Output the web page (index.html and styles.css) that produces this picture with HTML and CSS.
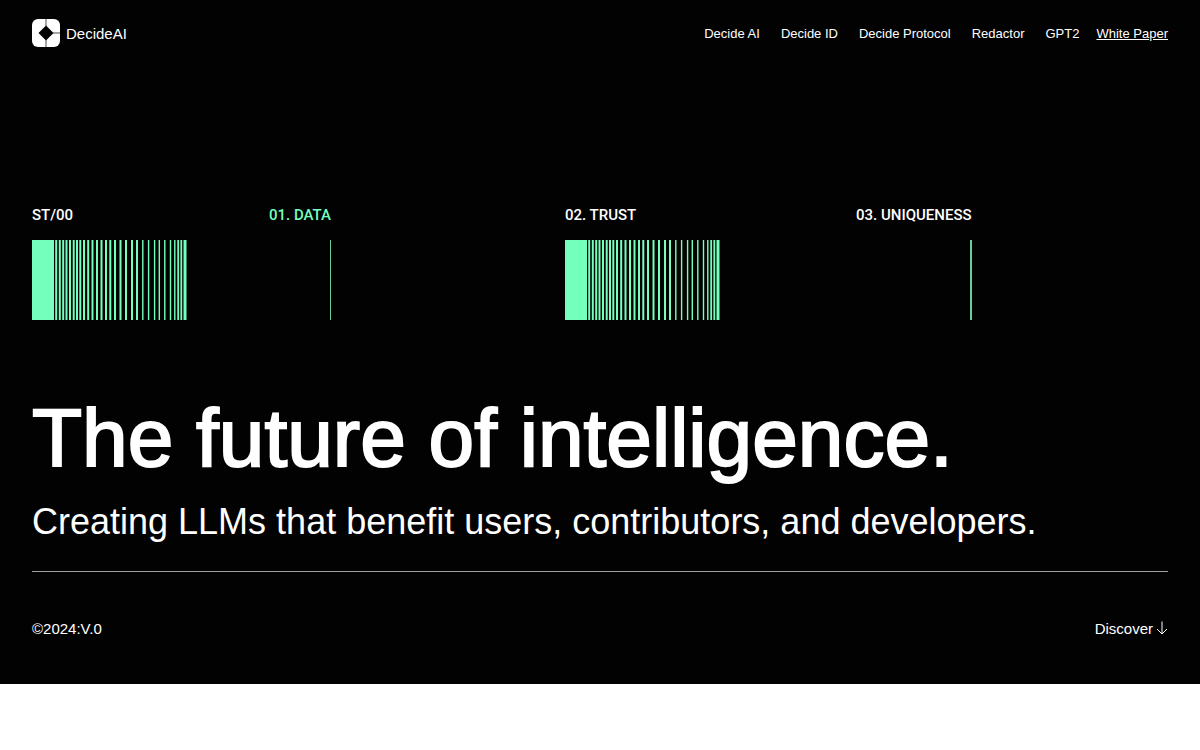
FILE: index.html
```
<!DOCTYPE html>
<html lang="en">
<head>
  <meta charset="utf-8">
  <meta name="viewport" content="width=device-width, initial-scale=1">
  <title>DecideAI</title>
  <link rel="stylesheet" href="styles.css">
</head>
<body>
  <!-- barcode shape, used twice below -->
  <svg class="sprite" aria-hidden="true">
    <symbol id="barcode" viewBox="0 0 155 80">
      <path fill="currentColor" d="M0 0h22v80H0z"/>
      <g fill="none" stroke="currentColor">
        <path stroke-width="2" d="M24.2 0v80M27.8 0v80M31.2 0v80M34.5 0v80M38 0v80M41.7 0v80M45 0v80M48.3 0v80M52 0v80M56.2 0v80M60.5 0v80M65 0v80M69.5 0v80M74 0v80M78.3 0v80M83 0v80M88.5 0v80M94 0v80M100 0v80M105 0v80"/>
        <path stroke-width="1.4" d="M110.8 0v80M116.6 0v80M122.6 0v80M127.3 0v80M132.8 0v80M138.5 0v80M142.8 0v80"/>
        <path stroke-width="1.8" d="M146.2 0v80M149.3 0v80"/>
        <path stroke-width="3" d="M153 0v80"/>
      </g>
    </symbol>
  </svg>

  <div class="hero">
    <header class="header">
      <a href="#" class="logo">
        <svg width="28" height="28" viewBox="0 0 28 28" aria-hidden="true">
          <rect width="28" height="28" rx="6" fill="#fff"/>
          <path d="M14 6.5 21.5 14 14 21.5 6.5 14z" fill="#020202"/>
          <path d="M14 0v7M14 21v7M21 14h7" stroke="#020202" stroke-width=".7"/>
        </svg>
        <span>DecideAI</span>
      </a>
      <nav class="nav">
        <a href="#">Decide AI</a>
        <a href="#">Decide ID</a>
        <a href="#">Decide Protocol</a>
        <a href="#">Redactor</a>
        <a href="#">GPT2</a>
        <a href="#" class="paper">White Paper</a>
      </nav>
    </header>

    <main>
      <div class="stats">
        <div class="stat">
          <span>ST/00</span>
          <svg class="barcode"><use href="#barcode"/></svg>
        </div>
        <div class="stat active">
          <span>01. DATA</span>
          <div class="bar thin"></div>
        </div>
        <div class="stat">
          <span>02. TRUST</span>
          <svg class="barcode"><use href="#barcode"/></svg>
        </div>
        <div class="stat">
          <span>03. UNIQUENESS</span>
          <div class="bar"></div>
        </div>
      </div>

      <h1>The future of intelligence.</h1>
      <p class="subtitle">Creating LLMs that benefit users, contributors, and developers.</p>
    </main>

    <footer class="footer">
      <span>©2024:V.0</span>
      <a href="#" class="discover">
        Discover
        <svg width="12" height="14" viewBox="0 0 12 14" fill="none" stroke="currentColor" aria-hidden="true">
          <path d="M6 .5v12.5M1 8l5 5 5-5"/>
        </svg>
      </a>
    </footer>
  </div>
</body>
</html>
```
FILE: styles.css
```
body {
  margin: 0;
  background: #ffffff;
  color: #ffffff;
  font-family: "Liberation Sans", Arial, sans-serif;
}

a {
  color: inherit;
  text-decoration: none;
}

.sprite {
  display: block;
  width: 0;
  height: 0;
}

.hero {
  padding: 0 32px;
  background: #020202;
}

.header {
  display: flex;
  align-items: center;
  justify-content: space-between;
  height: 66px;
}

.logo {
  display: flex;
  align-items: center;
  gap: 6px;
  font-size: 15px;
}

.nav {
  display: flex;
  gap: 21px;
  font-size: 13px;
}

.nav .paper {
  margin-left: -4px;
  text-decoration: underline;
}

.stats {
  display: grid;
  grid-template-columns: 237fr 296fr 291fr 312fr;
  padding-top: 139px;
}

.stat {
  display: flex;
  flex-direction: column;
  gap: 15px;
  width: fit-content;
  font-family: Roboto, sans-serif;
  font-size: 15px;
  font-weight: 500;
  line-height: 20px;
}

.active {
  color: #75ffbc;
}

.barcode {
  width: 155px;
  height: 80px;
  color: #75ffbc;
}

.bar {
  width: 2px;
  height: 80px;
  margin-left: auto;
  background: #62cf9c;
}

.bar.thin {
  width: 1px;
}

h1 {
  margin: 66px 0 0;
  font-size: 82px;
  font-weight: 400;
  line-height: 104px;
  -webkit-text-stroke: 2px currentColor;
}

.subtitle {
  margin: 8px 0 0;
  font-size: 36px;
  line-height: 48px;
}

.footer {
  display: flex;
  align-items: center;
  justify-content: space-between;
  height: 112px;
  margin-top: 25px;
  border-top: 1px solid #a0a0a0;
  font-size: 15px;
}

.discover {
  display: flex;
  align-items: center;
  gap: 3px;
}
```
